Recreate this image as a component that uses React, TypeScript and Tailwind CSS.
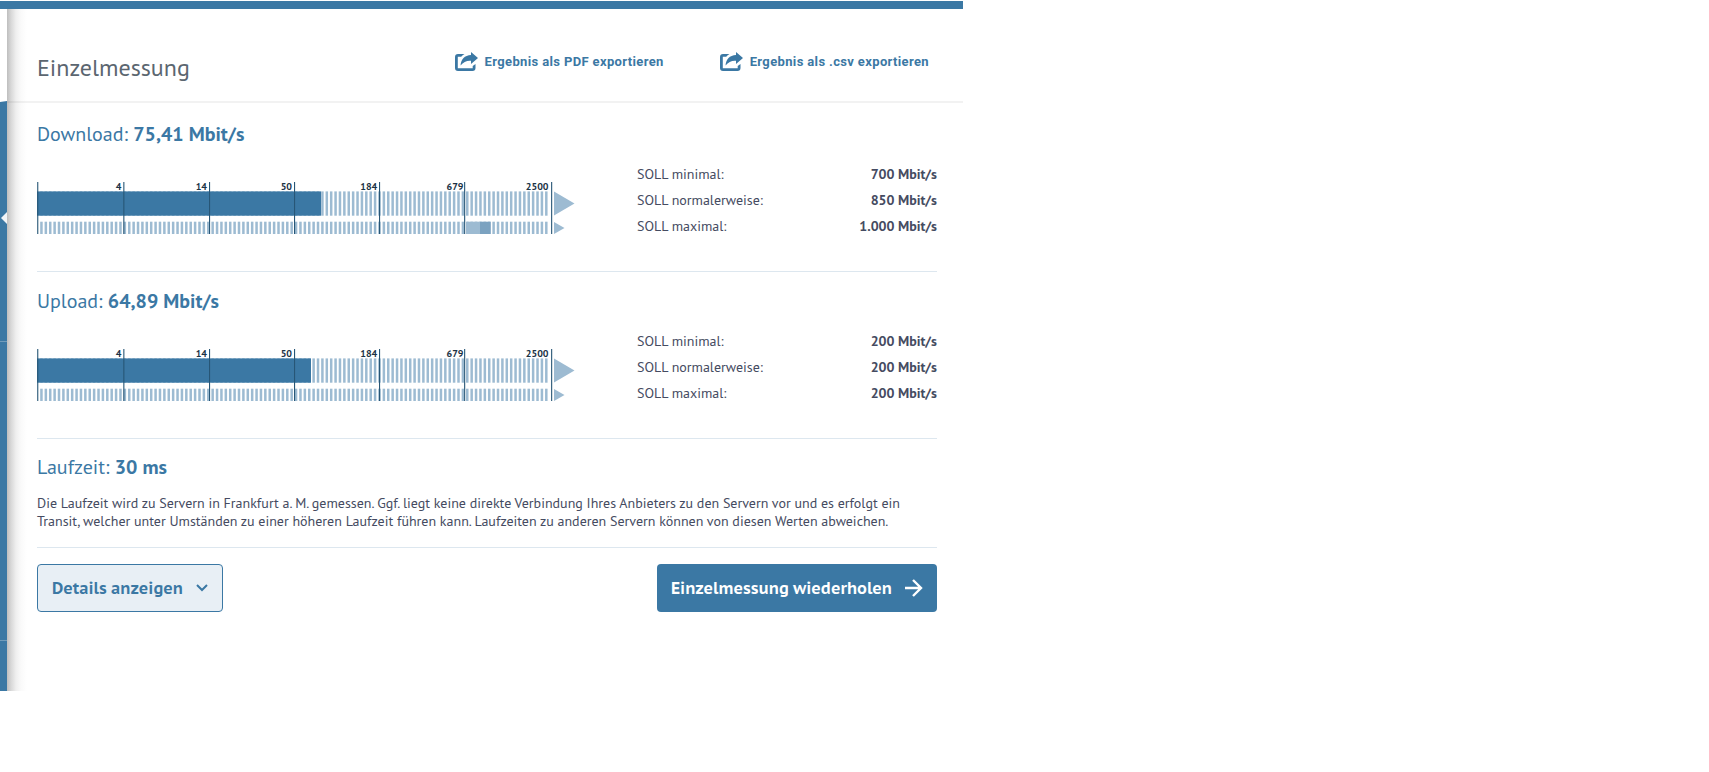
import { ReactNode } from "react";

// x positions are relative to the gauge's left edge
const TICKS = [
  { x: 0.2, labelX: 0, label: "" },
  { x: 86.3, labelX: 84.3, label: "4" },
  { x: 172, labelX: 170, label: "14" },
  { x: 257, labelX: 255, label: "50" },
  { x: 342, labelX: 340.3, label: "184" },
  { x: 427.1, labelX: 426.5, label: "679" },
  { x: 514.1, labelX: 511.5, label: "2500" },
];

const STRIPES = Array.from({ length: 116 }, (_, i) => 3.2 + i * 4.39);

function Gauge({ value, range }: { value: number; range?: boolean }) {
  return (
    <svg width="540" height="54" viewBox="0 -2 540 54" className="block overflow-visible">
      <g fill="#9dbbd2">
        {STRIPES.map((x) => (
          <g key={x}>
            <rect x={x} y="9.4" width="2.5" height="24.3" />
            <rect x={x} y="39.7" width="2.5" height="12.3" />
          </g>
        ))}
        <path d="M517 9.5 537.500 21.500 517 33.500Z" />
        <path d="M517 40 527.500 46 517 52Z" />
      </g>
      <rect x="0" y="9.4" width={value} height="24.3" fill="#3b78a4" />
      {range && (
        <>
          <rect x="429.7" y="39.7" width="13.3" height="12.3" fill="#9dbbd2" />
          <rect x="443" y="39.7" width="10.7" height="12.3" fill="#7ba2c0" />
        </>
      )}
      {TICKS.map((t) => (
        <g key={t.x}>
          <rect x={t.x} y="0" width="1.1" height="52" fill="#275676" />
          {t.label && (
            <text x={t.labelX} y="8" textAnchor="end" className="fill-[#1b3345] font-['PT_Sans',sans-serif] text-[10px] font-bold">
              {t.label}
            </text>
          )}
        </g>
      ))}
    </svg>
  );
}

function ExportIcon() {
  return (
    <svg width="23" height="19" viewBox="0 0 23 19" fill="#3b78a4">
      <path d="M9.500 2H3A3 3 0 0 0 0 5V16A3 3 0 0 0 3 19H17.500A3 3 0 0 0 20.500 16V12L17.700 14V16.200H2.800V4.800H6.200Q7.500 3 9.500 2Z" />
      <path d="M16 0 23 6 16 12V8.800C11.500 8.500 8.500 10 5.500 13.500C6 7.500 9.500 3.300 16 3Z" />
    </svg>
  );
}

function ExportLink({ children }: { children: ReactNode }) {
  return (
    <a href="#" className="flex items-center gap-[7px] font-[Roboto,sans-serif] text-[13px] leading-[19px] font-bold text-[#3b78a4]">
      <ExportIcon />
      <span className="whitespace-nowrap tracking-[0.36px]">{children}</span>
    </a>
  );
}

function Heading({ label, value }: { label: string; value: string }) {
  return (
    <h2 className="h-8 whitespace-nowrap text-[20px] leading-8 text-[#3b78a4]">
      {label}: <strong className="font-bold">{value}</strong>
    </h2>
  );
}

type MeasurementProps = {
  label: string;
  value: string;
  bar: number;
  range?: boolean;
  limits: [string, string][];
};

function Measurement({ label, value, bar, range, limits }: MeasurementProps) {
  return (
    <section className="h-[167px] border-b border-[#dde7ef] pt-[13px]">
      <Heading label={label} value={value} />
      <div className="flex justify-between">
        <div className="pt-[30px]">
          <Gauge value={bar} range={range} />
        </div>
        <dl className="w-[300px] pt-[11px] text-[14px] leading-[26px] text-[#454b61]">
          {limits.map(([name, limit]) => (
            <div key={name} className="flex justify-between">
              <dt>SOLL {name}:</dt>
              <dd className="font-bold">{limit}</dd>
            </div>
          ))}
        </dl>
      </div>
    </section>
  );
}

export default function App() {
  return (
    <div className="h-[772px] w-full bg-white font-['PT_Sans',Lato,sans-serif]">
      <div className="w-[963px] pt-px">
        <div className="h-2 bg-[#3b78a4]" />
        <div className="flex h-[682px]">
          <aside className="flex w-[7px] flex-col pt-[92px]">
            <div className="relative flex-1 bg-[#3b78a4] [clip-path:polygon(0_1px,100%_0,100%_100%,0_100%)]">
              <svg width="6" height="12" viewBox="0 0 6 12" className="absolute right-0 top-[111px]">
                <path d="M6 0 0 6 6 12Z" fill="#f1f4f7" />
              </svg>
              <div className="absolute top-[240px] h-px w-full bg-[#719cbb]" />
              <div className="absolute top-[539px] h-px w-full bg-[#719cbb]" />
            </div>
          </aside>
          <main className="flex-1 bg-[linear-gradient(to_right,#bebebe_0px,#d8d8d8_4px,#efefef_9px,#fafafa_14px,#fff_20px)]">
            <header className="flex h-[94px] items-start justify-between border-b-2 border-black/5 pl-[30px] pr-[34px]">
              <h1 className="pt-[41px] text-[24px] leading-9 text-[#5b6670]">Einzelmessung</h1>
              <div className="flex gap-[56px] pt-[43px]">
                <ExportLink>Ergebnis als PDF exportieren</ExportLink>
                <ExportLink>Ergebnis als .csv exportieren</ExportLink>
              </div>
            </header>
            <div className="pl-[30px] pr-[26px] pt-0.5">
              <Measurement
                label="Download"
                value="75,41 Mbit/s"
                bar={284}
                range
                limits={[
                  ["minimal", "700 Mbit/s"],
                  ["normalerweise", "850 Mbit/s"],
                  ["maximal", "1.000 Mbit/s"],
                ]}
              />
              <Measurement
                label="Upload"
                value="64,89 Mbit/s"
                bar={274}
                limits={[
                  ["minimal", "200 Mbit/s"],
                  ["normalerweise", "200 Mbit/s"],
                  ["maximal", "200 Mbit/s"],
                ]}
              />
              <section className="h-[109px] border-b border-[#dde7ef] pt-3">
                <Heading label="Laufzeit" value="30 ms" />
                <p className="whitespace-nowrap pt-[11px] text-[14px] leading-[18px] text-[#454b61]">
                  Die Laufzeit wird zu Servern in Frankfurt a. M. gemessen. Ggf. liegt keine direkte Verbindung Ihres Anbieters zu den Servern vor und es erfolgt ein
                  <br />
                  Transit, welcher unter Umständen zu einer höheren Laufzeit führen kann. Laufzeiten zu anderen Servern können von diesen Werten abweichen.
                </p>
              </section>
              <div className="flex justify-between pt-4 font-['PT_Sans_Caption','Noto_Sans',sans-serif] text-base font-bold">
                <button className="flex h-12 w-[186px] items-center justify-between rounded border border-[#3b78a4] bg-[#e8eff5] px-[14px] text-[#3b78a4]">
                  Details anzeigen
                  <svg width="12" height="8" viewBox="0 0 12 8" fill="none" stroke="#3b78a4" strokeWidth="2">
                    <path d="M1 1 6 6 11 1" />
                  </svg>
                </button>
                <button className="flex h-12 w-[280px] items-center justify-between rounded bg-[#3b78a4] px-[14px] text-white">
                  Einzelmessung wiederholen
                  <svg width="18" height="18" viewBox="0 0 18 18" fill="none" stroke="white" strokeWidth="2.400">
                    <path d="M0 9H16M8 1 16 9 8 17" />
                  </svg>
                </button>
              </div>
            </div>
          </main>
        </div>
      </div>
    </div>
  );
}
